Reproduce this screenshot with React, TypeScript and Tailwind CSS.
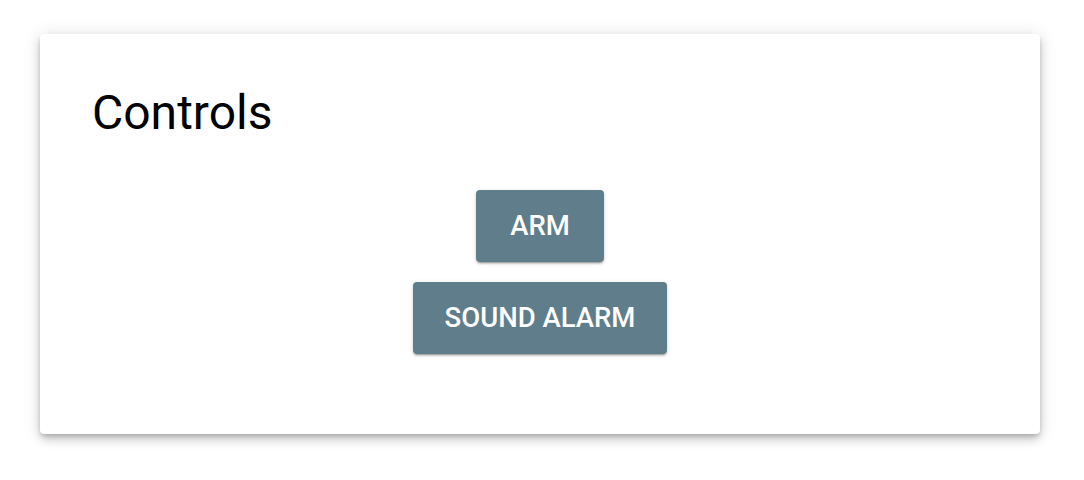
export default function App() {
  return (
    <div className="min-h-[480px] bg-white px-10 pt-[34px] font-['Roboto',sans-serif]">
      <div className="h-[400px] w-[1000px] rounded bg-white px-[52px] pt-[49px] shadow-[0_3px_5px_-1px_rgba(0,0,0,0.2),0_6px_10px_0_rgba(0,0,0,0.14),0_1px_18px_0_rgba(0,0,0,0.12)]">
        <h1 className="text-[48px] leading-[60px] font-normal text-black">Controls</h1>
        <div className="mt-[47px] flex flex-col items-center gap-5">
          <button className="h-[72px] min-w-[128px] rounded bg-[#607d8b] px-8 text-[27.5px] font-medium text-white uppercase shadow-[0_3px_1px_-2px_rgba(0,0,0,0.2),0_2px_2px_0_rgba(0,0,0,0.14),0_1px_5px_0_rgba(0,0,0,0.12)]">
            Arm
          </button>
          <button className="h-[72px] min-w-[128px] rounded bg-[#607d8b] px-8 text-[27.5px] font-medium text-white uppercase shadow-[0_3px_1px_-2px_rgba(0,0,0,0.2),0_2px_2px_0_rgba(0,0,0,0.14),0_1px_5px_0_rgba(0,0,0,0.12)]">
            Sound Alarm
          </button>
        </div>
      </div>
    </div>
  );
}
